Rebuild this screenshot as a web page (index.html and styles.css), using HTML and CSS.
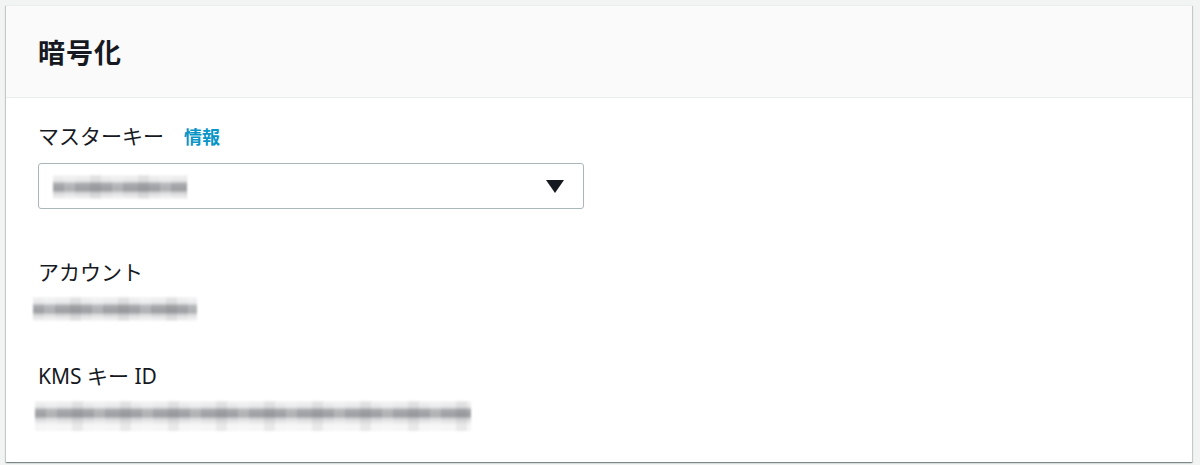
FILE: index.html
```html
<!DOCTYPE html>
<html lang="ja">
<head>
<meta charset="utf-8">
<link rel="stylesheet" href="styles.css">
</head>
<body>
<section class="card">
  <header class="card-header">
    <h2 class="title">暗号化</h2>
  </header>
  <div class="card-body">
    <div class="field">
      <div class="label-row">
        <span class="label">マスターキー</span>
        <a class="info">情報</a>
      </div>
      <div class="select">
        <div class="mosaic mosaic-select"></div>
        <svg class="caret" width="18" height="13" viewBox="0 0 18 13"><path d="M0 0 H18 L9 13 Z" fill="#16191f"/></svg>
      </div>
    </div>
    <div class="kv">
      <div class="label">アカウント</div>
      <div class="mosaic mosaic-account"></div>
    </div>
    <div class="kv">
      <div class="label">KMS キー ID</div>
      <div class="mosaic mosaic-key"></div>
    </div>
  </div>
</section>
</body>
</html>
```

FILE: styles.css
```css
* { box-sizing: border-box; }
html, body { margin: 0; }
body {
  background: #f2f3f3;
  padding: 5px 8px 3px 6px;
  font-family: "Noto Sans", "Noto Sans CJK JP", sans-serif;
  color: #16191f;
}
.card {
  background: #ffffff;
  height: 457px;
  box-shadow: 0 1px 1px 0 rgba(0, 28, 36, 0.3), 1px 1px 1px 0 rgba(0, 28, 36, 0.15), -1px 1px 1px 0 rgba(0, 28, 36, 0.15);
  border-top: 1px solid #eaeded;
}
.card-header {
  height: 92px;
  background: #fafafa;
  border-bottom: 1px solid #eaeded;
  display: flex;
  align-items: center;
  padding-left: 32px;
}
.title {
  margin: 0;
  font-family: "Noto Sans CJK JP", sans-serif;
  font-size: 27px;
  font-weight: 700;
  letter-spacing: 1px;
  color: #16191f;
}
.card-body {
  padding: 23px 32px 0 32px;
  display: flex;
  flex-direction: column;
}
.label-row {
  display: flex;
  align-items: baseline;
  gap: 20px;
  height: 36px;
}
.label {
  font-size: 21px;
  line-height: 30px;
  color: #16191f;
}
.info {
  font-family: "Noto Sans CJK JP", sans-serif;
  font-size: 18px;
  font-weight: 700;
  color: #0a95c8;
}
.select {
  margin-top: 6px;
  width: 546px;
  height: 46px;
  border: 1px solid #aab7b8;
  border-radius: 3px;
  display: flex;
  align-items: center;
  justify-content: space-between;
  padding: 0 19px 0 14px;
}
.mosaic {
  height: 24px;
  filter: blur(1px);
  background:
    repeating-linear-gradient(to right, rgba(255,255,255,0) 0, rgba(255,255,255,0) 11px, rgba(255,255,255,0.18) 11px, rgba(255,255,255,0.18) 22px, rgba(255,255,255,0) 22px, rgba(255,255,255,0) 37px, rgba(0,0,0,0.05) 37px, rgba(0,0,0,0.05) 48px),
    linear-gradient(to bottom, #f4f4f4 0, #e6e7e8 6px, #a9aaad 9px, #9c9ea1 15px, #d7d8da 18px, #f6f6f6 24px);
}
.mosaic-select { width: 134px; margin-top: 1px; }
.mosaic-account { width: 164px; margin-left: -5px; margin-top: 10px; }
.mosaic-key { width: 436px; margin-left: -3px; margin-top: 10px; height: 30px; }
.kv { display: flex; flex-direction: column; }
.kv:nth-child(2) { margin-top: 48px; }
.kv:nth-child(3) { margin-top: 40px; }
.caret { display: block; }
```
